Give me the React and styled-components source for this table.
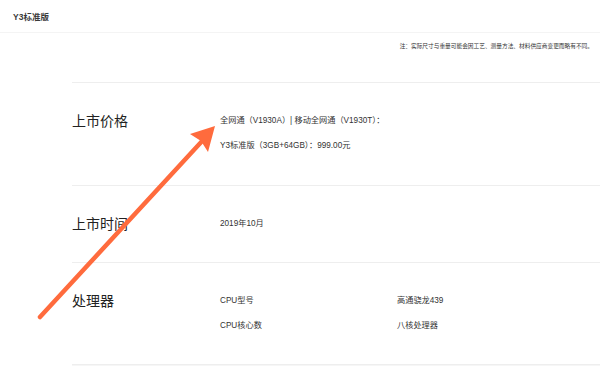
import styled, { createGlobalStyle } from "styled-components";

const GlobalStyle = createGlobalStyle`
  html, body {
    margin: 0;
    padding: 0;
    background: #fff;
  }
  body {
    font-family: "Liberation Sans", "Noto Sans CJK SC", sans-serif;
    color: #333;
  }
`;

const Page = styled.div`
  position: relative;
  width: 600px;
  height: 366px;
  overflow: hidden;
`;

const Header = styled.div`
  height: 32px;
  display: flex;
  align-items: center;
  padding-left: 13px;
  border-bottom: 1px solid #f4f4f4;
  font-size: 8.5px;
  font-weight: 600;
  color: #3a3a3a;
`;

const Note = styled.div`
  text-align: right;
  padding: 9px 7px 0 0;
  height: 49px;
  box-sizing: border-box;
  font-size: 5.7px;
  line-height: 8px;
  color: #333;
`;

const Specs = styled.div`
  margin-left: 72px;
  border-top: 1px solid #eeeeee;
`;

const Row = styled.div`
  display: flex;
  align-items: flex-start;
  height: ${(p) => p.$h}px;
  box-sizing: border-box;
  padding-top: 30px;
  border-bottom: 1px solid #eeeeee;
`;

const Title = styled.div`
  width: 148px;
  flex-shrink: 0;
  font-size: 14px;
  line-height: 16px;
  color: #222;
`;

const Values = styled.div`
  display: flex;
  flex-direction: column;
  gap: 9px;
`;

const Line = styled.div`
  display: flex;
  font-size: 8.2px;
  line-height: 16px;
  color: #333;
`;

const Label = styled.span`
  width: 177px;
`;

const Tail = styled.div`
  height: 4px;
  background: #f6f6f6;
`;

const Arrow = styled.svg`
  position: absolute;
  left: 0;
  top: 0;
  pointer-events: none;
`;

export default function App() {
  return (
    <Page>
      <GlobalStyle />
      <Header>Y3标准版</Header>
      <Note>注：实际尺寸与重量可能会因工艺、测量方法、材料供应商变更而略有不同。</Note>
      <Specs>
        <Row $h={103}>
          <Title>上市价格</Title>
          <Values>
            <Line>全网通（V1930A）| 移动全网通（V1930T）：</Line>
            <Line>Y3标准版（3GB+64GB）：999.00元</Line>
          </Values>
        </Row>
        <Row $h={77}>
          <Title>上市时间</Title>
          <Values>
            <Line>2019年10月</Line>
          </Values>
        </Row>
        <Row $h={102}>
          <Title>处理器</Title>
          <Values>
            <Line>
              <Label>CPU型号</Label>
              <span>高通骁龙439</span>
            </Line>
            <Line>
              <Label>CPU核心数</Label>
              <span>八核处理器</span>
            </Line>
          </Values>
        </Row>
        <Tail />
      </Specs>
      <Arrow width="600" height="366" viewBox="0 0 600 366">
        <line
          x1="40"
          y1="317"
          x2="204"
          y2="139"
          stroke="#ff6b3d"
          strokeWidth="4.5"
          strokeLinecap="round"
        />
        <polygon points="215,126 190,134 201,141 208,152" fill="#ff6b3d" />
      </Arrow>
    </Page>
  );
}
